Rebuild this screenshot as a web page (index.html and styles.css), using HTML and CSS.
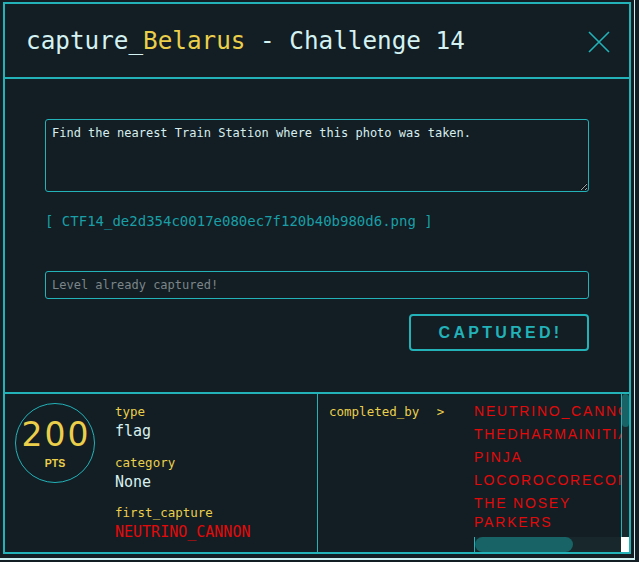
FILE: index.html
```html
<!DOCTYPE html>
<html lang="en">
<head>
    <meta charset="UTF-8">
    <meta name="viewport" content="width=device-width, initial-scale=1.0">
    <title>capture_Belarus - Challenge 14</title>
    <link rel="stylesheet" href="styles.css">
</head>
<body>

    <div class="frame">
        <div class="modal">
            <header class="modal-header">
                <h2 class="modal-title">capture_<span class="hl">Belarus</span> - Challenge 14</h2>
                <button class="close" aria-label="Close">
                    <svg width="22" height="22" viewBox="0 0 22 22">
                        <path d="M1 1 L21 21 M21 1 L1 21" stroke="#22b2b8" stroke-width="1.6" fill="none"/>
                    </svg>
                </button>
            </header>

            <div class="modal-body">
                <textarea class="description" readonly>Find the nearest Train Station where this photo was taken.</textarea>
                <a class="file-link" href="#">[ CTF14_de2d354c0017e080ec7f120b40b980d6.png ]</a>
                <input class="flag-input" type="text" placeholder="Level already captured!" readonly>
                <div class="actions">
                    <button class="btn-capture">Captured!</button>
                </div>
            </div>

            <div class="modal-footer">
                <div class="stats">
                    <div class="points">
                        <span class="points-value">200</span>
                        <span class="points-label">PTS</span>
                    </div>
                    <div class="info">
                        <div class="info-group">
                            <div class="info-label">type</div>
                            <div class="info-value">flag</div>
                        </div>
                        <div class="info-group">
                            <div class="info-label">category</div>
                            <div class="info-value">None</div>
                        </div>
                        <div class="info-group">
                            <div class="info-label">first_capture</div>
                            <div class="info-value team">NEUTRINO_CANNON</div>
                        </div>
                    </div>
                </div>

                <div class="completed">
                    <div class="completed-label">completed_by <span class="arrow">&gt;</span></div>
                    <div class="completed-scroll">
                        <div class="viewport">
                            <ul class="completed-list">
                                <li>NEUTRINO_CANNON</li>
                                <li>THEDHARMAINITIATIVE</li>
                                <li>PINJA</li>
                                <li>LOCOROCORECON</li>
                                <li>THE NOSEY PARKERS</li>
                            </ul>
                        </div>
                        <div class="track track-v"><div class="thumb thumb-v"></div></div>
                        <div class="track track-h"><div class="thumb thumb-h"></div></div>
                        <div class="corner"></div>
                    </div>
                </div>
            </div>
        </div>
    </div>

</body>
</html>
```

FILE: styles.css
```css
body {
    margin: 0;
    background-color: #121e24;
    color: #d4f2f2;
    font-family: 'DejaVu Sans Mono', monospace;
}

/* cadre extérieur clair à droite et en bas */
.frame {
    width: 628px;
    height: 552px;
    padding: 2px 3px 4px 3px;
    border-right: 1px solid #cdeff0;
    border-bottom: 2px solid #cdeff0;
}

.modal {
    width: 628px;
    height: 552px;
    box-sizing: border-box;
    border: 2px solid #22b2b8;
    display: flex;
    flex-direction: column;
}

.modal-header {
    height: 73px;
    flex-shrink: 0;
    border-bottom: 2px solid #22b2b8;
    display: flex;
    align-items: center;
    justify-content: space-between;
    padding: 0 19px 0 21px;
}

.modal-title {
    margin: 0;
    font-size: 24.3px;
    font-weight: normal;
    color: #d4f2f2;
}

.hl {
    color: #ebcf4b;
}

.close {
    background: none;
    border: none;
    padding: 0;
    width: 22px;
    height: 22px;
    margin-top: 2px;
    cursor: pointer;
}

.close svg {
    display: block;
}

.modal-body {
    height: 313px;
    flex-shrink: 0;
    box-sizing: border-box;
    padding: 40px 40px 0 40px;
    display: flex;
    flex-direction: column;
}

.description {
    height: 73px;
    box-sizing: border-box;
    background: transparent;
    border: 1px solid #22b2b8;
    border-radius: 3px;
    padding: 6px 7px 6px 6px;
    color: #d8eeee;
    font-family: 'DejaVu Sans Mono', monospace;
    font-size: 12px;
    line-height: 14px;
    outline: none;
    resize: vertical;
}

.file-link {
    margin-top: 20px;
    font-size: 14px;
    line-height: 18px;
    color: #1a9fa6;
    text-decoration: none;
    align-self: flex-start;
}

.flag-input {
    margin-top: 41px;
    height: 28px;
    box-sizing: border-box;
    background: transparent;
    border: 1px solid #22b2b8;
    border-radius: 3px;
    padding: 0 6px;
    color: #d8eeee;
    font-family: 'DejaVu Sans Mono', monospace;
    font-size: 12px;
    outline: none;
}

.flag-input::placeholder {
    color: #7c8589;
}

.actions {
    margin-top: 15px;
    display: flex;
    justify-content: flex-end;
}

.btn-capture {
    width: 180px;
    height: 37px;
    background: transparent;
    border: 2px solid #22b2b8;
    border-radius: 4px;
    color: #22b2b8;
    font-family: 'Liberation Sans', Arial, sans-serif;
    font-weight: bold;
    font-size: 16px;
    letter-spacing: 3.3px;
    text-transform: uppercase;
    padding: 0 0 0 3px;
    cursor: pointer;
}

.modal-footer {
    height: 158px;
    flex-shrink: 0;
    border-top: 2px solid #22b2b8;
    display: flex;
    overflow: hidden;
}

.stats {
    width: 313px;
    box-sizing: border-box;
    border-right: 1px solid #22b2b8;
    display: flex;
    align-items: flex-start;
    gap: 20px;
    padding: 9px 0 0 10px;
}

.points {
    width: 80px;
    height: 80px;
    box-sizing: border-box;
    border: 1px solid #22b2b8;
    border-radius: 50%;
    display: flex;
    flex-direction: column;
    align-items: center;
    padding-top: 14px;
    color: #ebcf4b;
}

.points-value {
    font-family: 'DejaVu Sans', sans-serif;
    font-size: 33px;
    line-height: 33px;
    letter-spacing: 2px;
    margin-left: 2px;
}

.points-label {
    margin-top: 6px;
    font-family: 'Liberation Sans', Arial, sans-serif;
    font-weight: bold;
    font-size: 10.5px;
    line-height: 12px;
}

.info {
    padding-top: 1px;
}

.info-group {
    margin-bottom: 13.5px;
}

.info-label {
    font-size: 12.5px;
    line-height: 15px;
    color: #ebcf4b;
}

.info-value {
    margin-top: 2px;
    font-size: 15px;
    line-height: 20px;
    color: #d8f0ee;
}

.info-value.team {
    color: #e20a0a;
}

.completed {
    flex: 1;
    display: flex;
    min-width: 0;
}

.completed-label {
    width: 156px;
    flex-shrink: 0;
    box-sizing: border-box;
    padding: 10px 0 0 11px;
    font-size: 12.5px;
    line-height: 15px;
    color: #ebcf4b;
}

.arrow {
    margin-left: 10px;
}

/* zone défilante avec barres dessinées à la main */
.completed-scroll {
    flex: 1;
    min-width: 0;
    display: grid;
    grid-template-columns: 1fr 8px;
    grid-template-rows: 1fr 15px;
}

.viewport {
    overflow: hidden;
    min-width: 0;
    min-height: 0;
}

.track {
    background: #17272c;
    border-left: 1px solid #22b2b8;
    box-sizing: border-box;
}

.thumb {
    background: #176365;
}

.thumb-v {
    height: 33px;
    border-radius: 4px;
}

.thumb-h {
    width: 98px;
    height: 15px;
    border-radius: 8px;
}

.corner {
    background: #ffffff;
}

.completed-list {
    list-style: none;
    margin: 0;
    padding: 8px 0 0 0;
    font-family: 'Liberation Sans', Arial, sans-serif;
    font-size: 14px;
    line-height: 19px;
    letter-spacing: 1.8px;
    color: #e20a0a;
}

.completed-list li {
    margin-bottom: 4px;
}
```
